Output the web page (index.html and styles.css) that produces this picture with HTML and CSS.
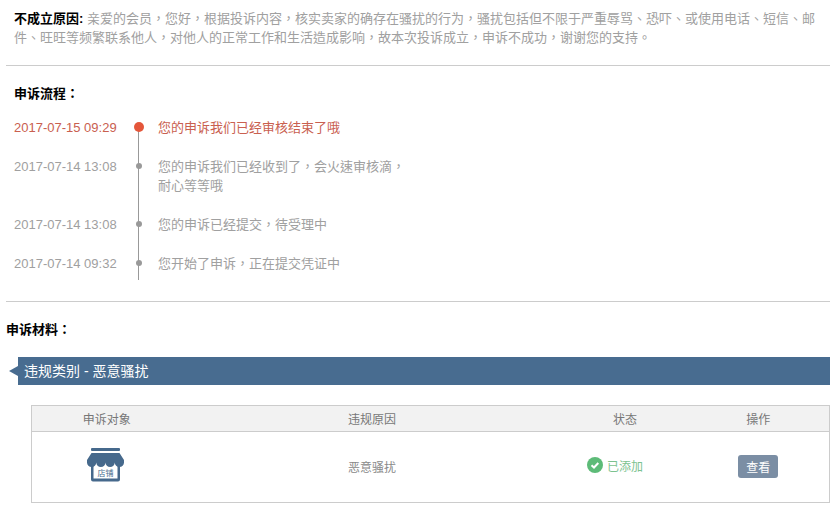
FILE: index.html
```html
<!DOCTYPE html>
<html lang="zh-Hant">
<head>
  <meta charset="UTF-8" />
  <title>申诉详情</title>
  <link rel="stylesheet" href="styles.css">
</head>
<body>
  <!-- 不成立原因 -->
  <p class="reason"><b>不成立原因:</b> 亲爱的会员，您好，根据投诉内容，核实卖家的确存在骚扰的行为，骚扰包括但不限于严重辱骂、恐吓、或使用电话、短信、邮<br>件、旺旺等频繁联系他人，对他人的正常工作和生活造成影响，故本次投诉成立，申诉不成功，谢谢您的支持。</p>
  <hr class="line" />

  <!-- 申诉流程 -->
  <h3 class="flow-title">申诉流程：</h3>
  <ul class="flow">
    <li class="flow-item current">
      <span class="flow-time">2017-07-15 09:29</span>
      <span class="flow-text">您的申诉我们已经审核结束了哦</span>
    </li>
    <li class="flow-item">
      <span class="flow-time">2017-07-14 13:08</span>
      <span class="flow-text">您的申诉我们已经收到了，会火速审核滴，耐心等等哦</span>
    </li>
    <li class="flow-item">
      <span class="flow-time">2017-07-14 13:08</span>
      <span class="flow-text">您的申诉已经提交，待受理中</span>
    </li>
    <li class="flow-item">
      <span class="flow-time">2017-07-14 09:32</span>
      <span class="flow-text">您开始了申诉，正在提交凭证中</span>
    </li>
  </ul>
  <hr class="line" />

  <!-- 申诉材料 -->
  <h3 class="material-title">申诉材料：</h3>
  <div class="banner">违规类别 - 恶意骚扰</div>
  <table class="material">
    <thead>
      <tr>
        <th class="col-target">申诉对象</th>
        <th class="col-reason">违规原因</th>
        <th class="col-status">状态</th>
        <th class="col-action">操作</th>
      </tr>
    </thead>
    <tbody>
      <tr>
        <td>
          <svg class="shop-icon" width="37" height="34" viewBox="0 0 37 34">
            <rect x="4" y="0" width="29" height="3" rx="1" fill="#46698c"/>
            <path d="M4 17h2.500v13.500h24V17H33v14.500a2 2 0 0 1-2 2H6a2 2 0 0 1-2-2z" fill="#46698c"/>
            <path d="M4.500 5h28L37 12v2.400a4.625 4.625 0 0 1-9.250 0 4.625 4.625 0 0 1-9.250 0 4.625 4.625 0 0 1-9.250 0 4.625 4.625 0 0 1-9.250 0V12z" fill="#46698c"/>
            <text x="18.500" y="28" class="shop-label" text-anchor="middle">店铺</text>
          </svg>
        </td>
        <td>恶意骚扰</td>
        <td>
          <span class="status">
            <svg width="16" height="16" viewBox="0 0 16 16">
              <circle cx="8" cy="8" r="8" fill="#5dbb78"/>
              <path d="M4.500 8.200l2.500 2.300 4.300-4.500" fill="none" stroke="#fff" stroke-width="2"/>
            </svg>
            <span class="status-text">已添加</span>
          </span>
        </td>
        <td><button class="view-btn">查看</button></td>
      </tr>
    </tbody>
  </table>
</body>
</html>
```

FILE: styles.css
```css
/* ===== base ===== */
*{box-sizing:border-box;margin:0;padding:0;}
body{font-family:"Liberation Sans","Noto Sans CJK TC",sans-serif;font-size:13px;color:#a0a0a0;background:#fff;padding-top:9px;}
.line{border:none;border-top:1px solid #ccc;margin-left:6px;margin-right:5px;}

/* ===== reason ===== */
.reason{line-height:19px;padding:0 0 0 14px;margin-bottom:18px;}
.reason b{color:#000;font-weight:700;}

/* ===== flow ===== */
.flow-title{font-size:13px;line-height:19px;color:#000;margin:18px 0 15px 14px;}
.flow{list-style:none;padding-left:14px;margin-bottom:28px;position:relative;}
.flow::before{content:"";position:absolute;left:138px;top:9px;bottom:-7px;width:1px;background:#999;}
.flow-item{display:flex;line-height:19px;padding-bottom:20px;position:relative;}
.flow-item:last-child{padding-bottom:0;}
.flow-item::before{content:"";position:absolute;left:121.500px;top:6px;width:6px;height:6px;border-radius:50%;background:#999;}
.flow-time{width:144px;flex:none;}
.flow-text{width:250px;}
.current{color:#c9604f;}
.current::before{left:120px;top:4px;width:10px;height:10px;background:#e4563a;}

/* ===== material ===== */
.material-title{font-size:13px;line-height:19px;color:#000;margin:18px 0 18px 6px;}
.banner{position:relative;margin:0 5px 20px 18px;height:28px;line-height:28px;padding-left:6px;background:#486c90;color:#fff;font-size:14px;}
.banner::before{content:"";position:absolute;left:-9px;top:9px;border:5px solid transparent;border-left:none;border-right:9px solid #486c90;}
.material{width:798px;margin-left:31px;border-collapse:collapse;table-layout:fixed;text-align:center;font-size:12px;}
.material th,.material td{border-top:1px solid #ccc;border-bottom:1px solid #ccc;}
.material th:first-child,.material td:first-child{border-left:1px solid #ccc;}
.material th:last-child,.material td:last-child{border-right:1px solid #ccc;}
.material th{height:26px;background:#f2f2f2;font-weight:400;color:#777;}
.material td{height:71px;color:#888;padding-bottom:2px;}
.col-target{width:150px;}
.col-reason{width:381px;}
.col-status{width:125px;}
.col-action{width:142px;}
.shop-icon{display:block;margin:0 0 3px 55px;}
.shop-label{font-size:8px;fill:#46698c;}
.status{display:inline-flex;align-items:flex-start;gap:4px;color:#7cc28f;margin-right:20px;}
.status-text{line-height:16px;margin:2px 0 -2px;}
.view-btn{width:40px;height:23px;border:none;border-radius:3px;background:#7b8ea4;color:#fff;font:inherit;cursor:pointer;}
```
